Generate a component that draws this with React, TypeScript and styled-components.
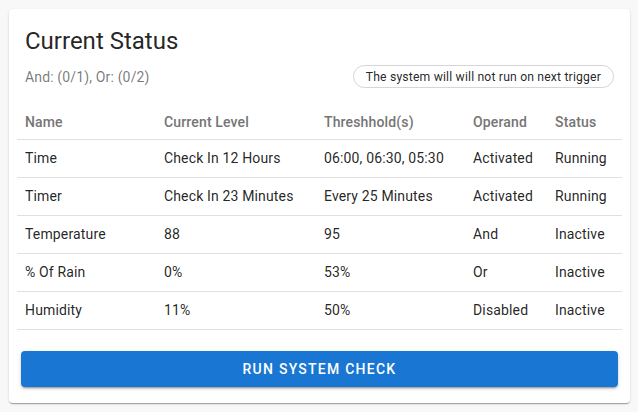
import React from "react";
import styled, { createGlobalStyle } from "styled-components";

const Global = createGlobalStyle`
  html, body { margin: 0; padding: 0; background: #f8f8f8; }
  body { font-family: Roboto, "Liberation Sans", Arial, sans-serif; }
`;

const Page = styled.div`
  padding: 9px 8px 9px 9px;
`;

const Card = styled.div`
  width: 621px;
  height: 394px;
  box-sizing: border-box;
  background: #fff;
  border-radius: 4px;
  box-shadow: 0 2px 1px -1px rgba(0,0,0,0.2), 0 1px 1px 0 rgba(0,0,0,0.14), 0 1px 3px 0 rgba(0,0,0,0.12);
  display: flex;
  flex-direction: column;
`;

const Header = styled.div`
  padding: 16px 16px 0 16px;
`;

const Title = styled.h2`
  margin: 0;
  font-size: 24px;
  line-height: 32px;
  font-weight: 400;
  color: rgba(0,0,0,0.87);
`;

const SubRow = styled.div`
  margin-top: 8px;
  display: flex;
  align-items: center;
  justify-content: space-between;
  height: 23px;
`;

const Sub = styled.span`
  font-size: 14px;
  letter-spacing: 0.15px;
  color: rgba(0,0,0,0.54);
`;

const Chip = styled.span`
  box-sizing: border-box;
  height: 23px;
  display: inline-flex;
  align-items: center;
  padding: 0 12px;
  border: 1px solid #d6d6d6;
  border-radius: 12px;
  font-size: 12.2px;
  letter-spacing: 0.17px;
  color: rgba(0,0,0,0.87);
`;

const TableWrap = styled.div`
  padding: 17px 8px 0 8px;
`;

const Table = styled.table`
  width: 605px;
  border-collapse: collapse;
  table-layout: fixed;
`;

const Th = styled.th<{ $w: number }>`
  width: ${(p) => p.$w}px;
  height: 34px;
  box-sizing: border-box;
  padding: 0 8px;
  text-align: left;
  font-size: 14px;
  font-weight: 500;
  letter-spacing: 0.15px;
  color: #757575;
  border-bottom: 1px solid #e0e0e0;
`;

const Td = styled.td`
  height: 38px;
  box-sizing: border-box;
  padding: 0 8px;
  font-size: 14px;
  letter-spacing: 0.15px;
  color: rgba(0,0,0,0.87);
  border-bottom: 1px solid #e0e0e0;
  white-space: nowrap;
`;

const Footer = styled.div`
  padding: 21px 12px 0 12px;
`;

const Button = styled.button`
  width: 100%;
  height: 36px;
  border: none;
  border-radius: 4px;
  background: #1976d2;
  color: #fff;
  font-family: Roboto, "Liberation Sans", Arial, sans-serif;
  font-size: 14px;
  font-weight: 500;
  letter-spacing: 1.25px;
  text-transform: uppercase;
  box-shadow: 0 3px 1px -2px rgba(0,0,0,0.2), 0 2px 2px 0 rgba(0,0,0,0.14), 0 1px 5px 0 rgba(0,0,0,0.12);
  cursor: pointer;
`;

const cols = [
  { label: "Name", w: 139 },
  { label: "Current Level", w: 160 },
  { label: "Threshhold(s)", w: 149 },
  { label: "Operand", w: 82 },
  { label: "Status", w: 75 },
];

const rows = [
  ["Time", "Check In 12 Hours", "06:00, 06:30, 05:30", "Activated", "Running"],
  ["Timer", "Check In 23 Minutes", "Every 25 Minutes", "Activated", "Running"],
  ["Temperature", "88", "95", "And", "Inactive"],
  ["% Of Rain", "0%", "53%", "Or", "Inactive"],
  ["Humidity", "11%", "50%", "Disabled", "Inactive"],
];

export default function App() {
  return (
    <>
      <Global />
      <Page>
        <Card>
          <Header>
            <Title>Current Status</Title>
            <SubRow>
              <Sub>And: (0/1), Or: (0/2)</Sub>
              <Chip>The system will will not run on next trigger</Chip>
            </SubRow>
          </Header>
          <TableWrap>
            <Table>
              <thead>
                <tr>
                  {cols.map((c) => (
                    <Th key={c.label} $w={c.w}>{c.label}</Th>
                  ))}
                </tr>
              </thead>
              <tbody>
                {rows.map((r) => (
                  <tr key={r[0]}>
                    {r.map((v, i) => (
                      <Td key={i}>{v}</Td>
                    ))}
                  </tr>
                ))}
              </tbody>
            </Table>
          </TableWrap>
          <Footer>
            <Button>Run System Check</Button>
          </Footer>
        </Card>
      </Page>
    </>
  );
}
